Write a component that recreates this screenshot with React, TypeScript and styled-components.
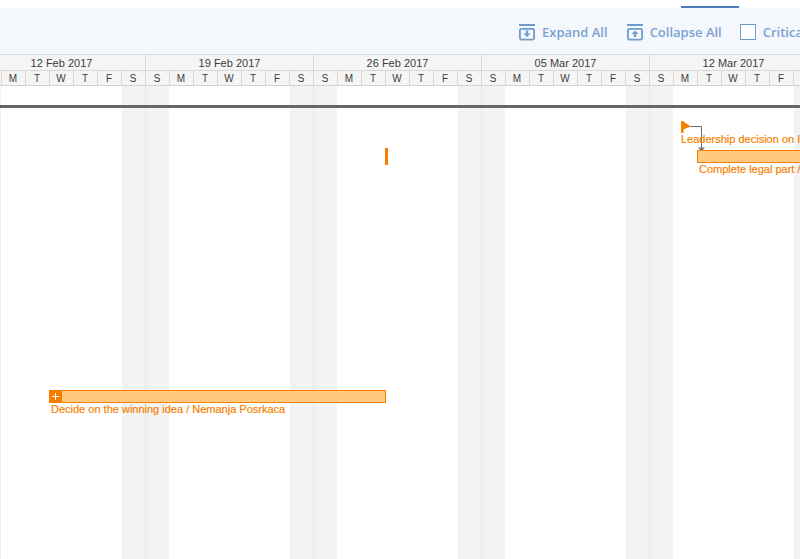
import React from "react";
import styled, { createGlobalStyle } from "styled-components";

const Global = createGlobalStyle`
  html, body { margin: 0; padding: 0; background: #fff; overflow: hidden; }
  body { font-family: "Liberation Sans", Arial, sans-serif; }
`;

const Page = styled.div`
  width: 800px;
  height: 559px;
  overflow: hidden;
  display: flex;
  flex-direction: column;
  background: #fff;
`;
const TopStrip = styled.div`
  height: 8px;
  flex: none;
  display: flex;
  justify-content: flex-end;
  padding-right: 61px;
  align-items: flex-end;
`;
const ActiveTab = styled.div`
  width: 58px;
  height: 2px;
  background: #4a7db5;
`;
const Toolbar = styled.div`
  height: 46px;
  flex: none;
  box-sizing: border-box;
  padding: 2px 0 0 519px;
  background: #f4f8fd;
  display: flex;
  align-items: center;
  white-space: nowrap;
  overflow: hidden;
`;
const ToolButton = styled.div<{ $gap: number }>`
  display: flex;
  align-items: center;
  gap: 7px;
  margin-right: ${(p) => p.$gap}px;
  font: 600 13px "Open Sans", sans-serif;
  color: #7ba2d0;
`;
const Check = styled.span`
  width: 14px;
  height: 14px;
  border: 1px solid #6f9bcd;
  background: #fff;
  flex: none;
`;
const Header = styled.div`
  flex: none;
  display: flex;
  margin-left: -22px;
  width: 900px;
  background: #f5f5f5;
  border-top: 1px solid #dcdcdc;
  border-bottom: 1px solid #d2d2d2;
`;
const Week = styled.div`
  flex: none;
  width: 168px;
  box-sizing: border-box;
  border-right: 1px solid #d8d8d8;
`;
const WeekTitle = styled.div`
  height: 15px;
  line-height: 16px;
  text-align: center;
  font-size: 11px;
  color: #3c3c3c;
  border-bottom: 1px solid #d8d8d8;
`;
const Days = styled.div`
  display: flex;
  height: 14px;
`;
const Day = styled.div`
  flex: 1;
  box-sizing: border-box;
  border-right: 1px solid #d8d8d8;
  padding-right: 1px;
  text-align: center;
  font-size: 10px;
  line-height: 15px;
  color: #3c3c3c;
  &:last-child { border-right: 0; }
`;
const Chart = styled.div`
  flex: 1;
  position: relative;
  overflow: hidden;
`;
const Columns = styled.div`
  position: absolute;
  inset: 0 auto 0 -22px;
  display: flex;
`;
const ColumnWeek = styled.div`
  flex: none;
  width: 168px;
  height: 100%;
  box-sizing: border-box;
  display: flex;
  justify-content: space-between;
  border-right: 1px solid #e8e8e8;
`;
const Shade = styled.div`
  width: 23px;
  background: #f3f3f3;
`;
const Divider = styled.div`
  position: absolute;
  left: 0;
  right: 0;
  top: 19px;
  height: 3px;
  background: #666;
`;
const EdgeLine = styled.div`
  position: absolute;
  left: 0;
  top: 22px;
  bottom: 0;
  width: 1px;
  background: #f0f0f0;
`;
const Bar = styled.div<{ $x: number; $y: number; $w: number }>`
  position: absolute;
  left: ${(p) => p.$x}px;
  top: ${(p) => p.$y}px;
  width: ${(p) => p.$w}px;
  height: 13px;
  box-sizing: border-box;
  background: #ffca80;
  border: 1px solid #f77f00;
`;
const Plus = styled.div`
  position: absolute;
  left: -1px;
  top: -1px;
  width: 13px;
  height: 13px;
  background: #f77f00;
  display: flex;
  align-items: center;
  justify-content: center;
`;
const Label = styled.div<{ $x: number; $y: number }>`
  position: absolute;
  left: ${(p) => p.$x}px;
  top: ${(p) => p.$y}px;
  font-size: 11px;
  line-height: 14px;
  color: #f77f00;
  -webkit-text-stroke: 0.2px #f77f00;
  white-space: nowrap;
`;
const Tick = styled.div`
  position: absolute;
  left: 385px;
  top: 62px;
  width: 3px;
  height: 17px;
  background: #f77f00;
`;
const Overlay = styled.svg`
  position: absolute;
  left: 676px;
  top: 30px;
`;

const weeks = ["12 Feb 2017", "19 Feb 2017", "26 Feb 2017", "05 Mar 2017", "12 Mar 2017", "19 Mar 2017"];
const dayNames = ["S", "M", "T", "W", "T", "F", "S"];

const TrayIcon = ({ up }: { up?: boolean }) => (
  <svg width="16" height="17" viewBox="0 0 16 17" fill="none">
    <path d="M0 1h16" stroke="#6f9bcd" strokeWidth="2" />
    <rect x="0.9" y="4.9" width="14.2" height="10.7" rx="1.5" stroke="#6f9bcd" strokeWidth="1.8" />
    {up ? (
      <path d="M8 6.500l3.500 3.500H9.200v3H6.800v-3H4.500z" fill="#6f9bcd" />
    ) : (
      <path d="M6.800 6.500h2.400v3h2.300L8 13 4.500 9.500h2.300z" fill="#6f9bcd" />
    )}
  </svg>
);

export default function App() {
  return (
    <Page>
      <Global />
      <TopStrip>
        <ActiveTab />
      </TopStrip>
      <Toolbar>
        <ToolButton $gap={19}>
          <TrayIcon />
          Expand All
        </ToolButton>
        <ToolButton $gap={18}>
          <TrayIcon up />
          Collapse All
        </ToolButton>
        <ToolButton $gap={0}>
          <Check />
          Critical Path
        </ToolButton>
      </Toolbar>
      <Header>
        {weeks.map((w) => (
          <Week key={w}>
            <WeekTitle>{w}</WeekTitle>
            <Days>
              {dayNames.map((d, i) => (
                <Day key={i}>{d}</Day>
              ))}
            </Days>
          </Week>
        ))}
      </Header>
      <Chart>
        <Columns>
          {weeks.map((w) => (
            <ColumnWeek key={w}>
              <Shade />
              <Shade />
            </ColumnWeek>
          ))}
        </Columns>
        <EdgeLine />
        <Divider />
        <Tick />
        <Overlay width="40" height="40" viewBox="0 0 40 40" fill="none">
          <path d="M5 5h1.500l8.500 5.500-7.500 3V17H5z" fill="#f77f00" />
          <path d="M14.500 10.500H25.500V33" stroke="#6a6a6a" strokeWidth="1" />
          <path d="M22 31.500h7l-3.500 4z" fill="#777" />
        </Overlay>
        <Label $x={681} $y={46}>Leadership decision on Idea</Label>
        <Bar $x={697} $y={64} $w={120} />
        <Label $x={699} $y={76}>Complete legal part / Nemanja</Label>
        <Bar $x={49} $y={304} $w={337}>
          <Plus>
            <svg width="7" height="7" viewBox="0 0 7 7">
              <path d="M3.500 0v7M0 3.500h7" stroke="#fff" strokeWidth="1" />
            </svg>
          </Plus>
        </Bar>
        <Label $x={51} $y={316}>Decide on the winning idea / Nemanja Posrkaca</Label>
      </Chart>
    </Page>
  );
}
